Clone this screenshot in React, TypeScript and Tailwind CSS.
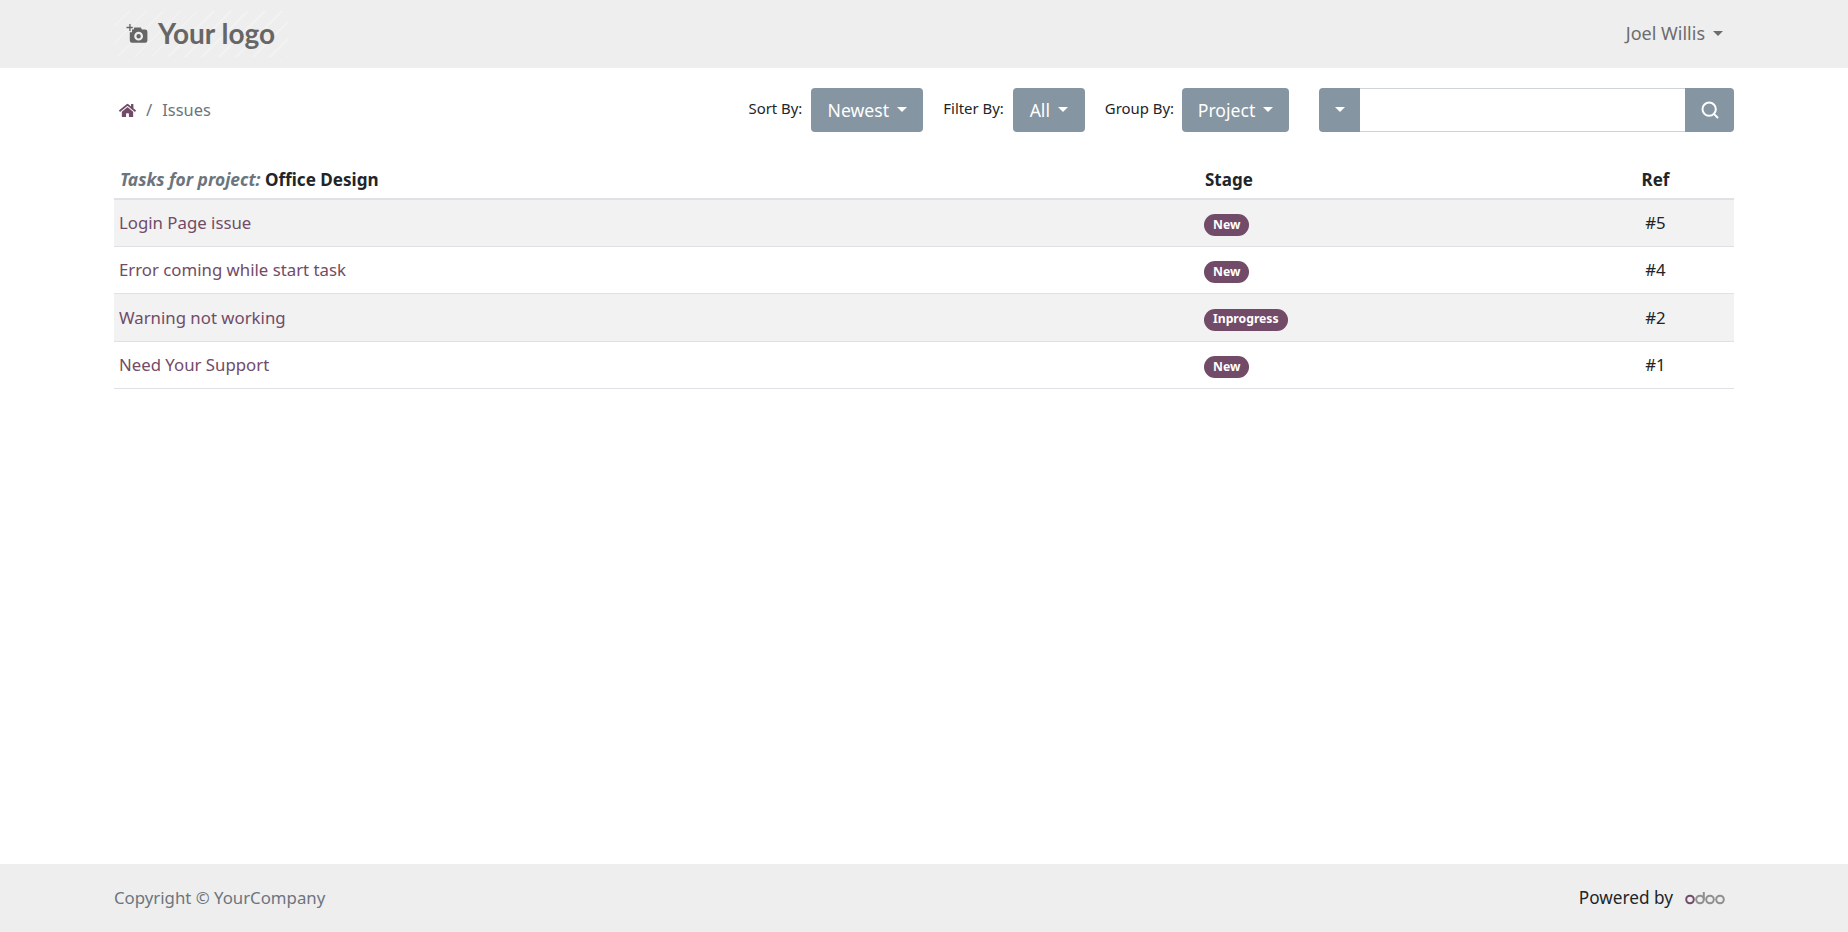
import React from "react";
import { FaHome } from "react-icons/fa";
import { Search } from "lucide-react";

const Caret = ({ className = "" }: { className?: string }) => (
  <span className={`inline-block w-0 h-0 border-t-[5px] border-x-[5px] border-x-transparent border-t-current ${className}`} />
);

const Sel = ({ label, value, w, ml, mr }: { label: string; value: string; w: string; ml: string; mr: string }) => (
  <div className={`flex items-center ${ml}`}>
    <span className={`text-[14.9px] text-[#212529] ${mr} -mt-1`}>{label}</span>
    <div className={`h-11 ${w} flex items-center justify-center gap-2 rounded bg-[#8595a2] text-white text-[17.6px]`}>
      {value}
      <Caret className="-mt-0.5" />
    </div>
  </div>
);

const rows = [
  { t: "Login Page issue", s: "New", r: "#5", h: "h-[47px]", bg: "bg-[#f2f2f2]" },
  { t: "Error coming while start task", s: "New", r: "#4", h: "h-[47px]", bg: "" },
  { t: "Warning not working", s: "Inprogress", r: "#2", h: "h-[48px]", bg: "bg-[#f2f2f2]" },
  { t: "Need Your Support", s: "New", r: "#1", h: "h-[47px]", bg: "" },
];

export default function App() {
  return (
    <div className="h-[932px] flex flex-col bg-white font-['Noto_Sans',sans-serif] text-[16.8px] text-[#212529]">
      <header className="h-[68px] bg-[#eeeeee] px-[114px] flex items-center justify-between">
        <div className="w-[174px] h-[46px] flex items-center pl-[12px] gap-[9px] text-[#666] bg-[repeating-linear-gradient(135deg,#eeeeee_0,#eeeeee_10px,#f2f2f2_10px,#f2f2f2_12px)]">
          <svg width="23" height="22" viewBox="0 0 20 20" fill="currentColor" className="-mt-px">
            <path d="M2.500 1v2.500H0v1.200h2.500v2.500h1.200V4.700h2V3.500h-2V1z" />
            <path fillRule="evenodd" d="M7 4h6l1 2h3a2 2 0 0 1 2 2v8a2 2 0 0 1-2 2H5a2 2 0 0 1-2-2V8.500h2V6h1.500zM11 8a4 4 0 1 0 0 8 4 4 0 0 0 0-8zm0 2a2 2 0 1 1 0 4 2 2 0 0 1 0-4z" />
          </svg>
          <span className="font-['Lato',sans-serif] font-bold text-[28px] leading-none -mt-0.5">Your logo</span>
        </div>
        <div className="flex items-center gap-2 pr-[11px] text-[#6c6c6c] text-[18px] -mt-0.5">
          Joel Willis
          <Caret />
        </div>
      </header>
      <main className="flex-1 px-[114px] pt-5">
        <div className="flex items-center justify-between h-11">
          <div className="flex items-center pl-[5px] text-[#6c757d]">
            <FaHome className="text-[#714b67] w-[17px] h-[17px]" />
            <span className="mx-[10px]">/</span>
            <span className="text-[16.4px]">Issues</span>
          </div>
          <div className="flex items-center">
            <Sel label="Sort By:" value="Newest" w="w-[112px]" ml="" mr="mr-[9px]" />
            <Sel label="Filter By:" value="All" w="w-[72px]" ml="ml-5" mr="mr-[9px]" />
            <Sel label="Group By:" value="Project" w="w-[107px]" ml="ml-5" mr="mr-[8px]" />
            <div className="ml-[30px] w-[415px] h-11 flex">
              <div className="w-[41px] bg-[#8595a2] rounded-l text-white flex items-center justify-center">
                <Caret className="-mt-0.5" />
              </div>
              <div className="flex-1 border-y border-[#ced4da] bg-white" />
              <div className="w-[49px] bg-[#8595a2] rounded-r text-white flex items-center justify-center">
                <Search size={20} strokeWidth={2.4} />
              </div>
            </div>
          </div>
        </div>
        <div className="mt-[22px] grid grid-cols-[1085px_1fr_157px] h-[46px] pt-[12px] items-baseline border-b-2 border-[#dee2e6] font-bold text-[17px]">
          <div className="pl-[6px]">
            <em className="text-[#6c757d] text-[17.4px]">Tasks for project:</em> <span className="text-[#212529] text-[17.1px]">Office Design</span>
          </div>
          <div className="pl-[6px]">Stage</div>
          <div className="text-center">Ref</div>
        </div>
        {rows.map((x) => (
          <div key={x.r} className={`grid grid-cols-[1085px_1fr_157px] items-center border-b border-[#dee2e6] ${x.h} ${x.bg}`}>
            <div className="pl-[5px] text-[#714b67]">{x.t}</div>
            <div className="pl-[5px]">
              <span className="inline-flex h-[22px] items-center rounded-full bg-[#714b67] px-[9px] text-white text-[12.2px] font-bold">{x.s}</span>
            </div>
            <div className="text-center">{x.r}</div>
          </div>
        ))}
      </main>
      <footer className="h-[68px] bg-[#eeeeee] px-[114px] flex items-center justify-between">
        <span className="text-[#6c757d]">Copyright © YourCompany</span>
        <div className="flex items-center gap-3 pr-[8px] text-[17.2px]">
          <span>Powered by</span>
          <svg width="41" height="14" viewBox="0 0 41 14" fill="none" strokeWidth="2">
            <circle cx="5" cy="8.500" r="3.800" stroke="#714b67" />
            <circle cx="15" cy="8.500" r="3.800" stroke="#8f8f8f" />
            <path d="M18.800 1v7.500" stroke="#8f8f8f" />
            <circle cx="25" cy="8.500" r="3.800" stroke="#8f8f8f" />
            <circle cx="35" cy="8.500" r="3.800" stroke="#8f8f8f" />
          </svg>
        </div>
      </footer>
    </div>
  );
}
